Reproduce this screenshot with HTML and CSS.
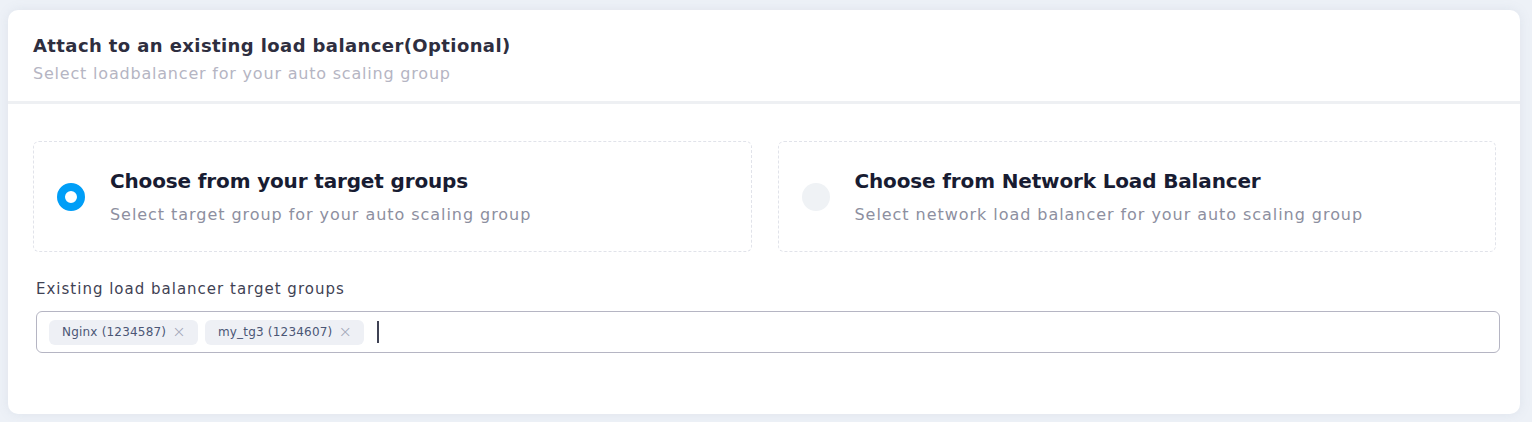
FILE: index.html
```html
<!DOCTYPE html>
<html lang="en">
<head>
<meta charset="utf-8">
<title>Attach load balancer</title>
<link rel="stylesheet" href="styles.css">
</head>
<body>
<div class="card">
  <div class="card-header">
    <h3 class="card-title">Attach to an existing load balancer(Optional)</h3>
    <div class="card-subtitle">Select loadbalancer for your auto scaling group</div>
  </div>
  <div class="card-body">
    <div class="options">
      <label class="option">
        <span class="radio radio-checked"></span>
        <span class="option-text">
          <span class="option-title">Choose from your target groups</span>
          <span class="option-desc">Select target group for your auto scaling group</span>
        </span>
      </label>
      <label class="option">
        <span class="radio"></span>
        <span class="option-text">
          <span class="option-title">Choose from Network Load Balancer</span>
          <span class="option-desc">Select network load balancer for your auto scaling group</span>
        </span>
      </label>
    </div>
    <div class="field">
      <div class="field-label">Existing load balancer target groups</div>
      <div class="tag-input">
        <span class="tag">Nginx (1234587)<span class="tag-x">×</span></span>
        <span class="tag">my_tg3 (1234607)<span class="tag-x">×</span></span>
        <span class="caret"></span>
      </div>
    </div>
  </div>
</div>
</body>
</html>
```
FILE: styles.css
```css
* { box-sizing: border-box; }
html, body { margin: 0; padding: 0; }
body {
  background: #edf1f7;
  font-family: "DejaVu Sans", "Inter", sans-serif;
  padding: 10px 12px 8px 8px;
  width: 1532px;
  height: 422px;
  overflow: hidden;
}
.card {
  width: 1512px;
  height: 404px;
  background: #ffffff;
  border-radius: 10px;
  box-shadow: 0 0 12px rgba(120, 130, 160, 0.12);
}
.card-header {
  padding: 22px 25px 15px;
  border-bottom: 3px solid #eef0f3;
}
.card-title {
  margin: 0;
  font-size: 18px;
  line-height: 27px;
  font-weight: 600;
  color: #2e2e3f;
  letter-spacing: 0.4px;
}
.card-subtitle {
  margin-top: 3px;
  font-size: 16px;
  line-height: 24px;
  color: #b5b5c3;
  letter-spacing: 0.8px;
}
.card-body {
  padding: 37px 24px 0 25px;
}
.options {
  display: grid;
  grid-template-columns: 1fr 1fr;
  gap: 26px;
}
.option {
  height: 111px;
  border: 1px dashed #e1e3ea;
  border-radius: 6px;
  display: flex;
  align-items: center;
  padding-left: 23px;
  gap: 25px;
}
.radio {
  width: 28px;
  height: 28px;
  border-radius: 50%;
  background: #eff2f5;
  flex: none;
}
.radio-checked {
  background: #ffffff;
  border: 8px solid #009ef7;
}
.option-text {
  display: flex;
  flex-direction: column;
}
.option-title {
  font-size: 20px;
  line-height: 30px;
  font-weight: 600;
  color: #181c32;
  letter-spacing: -0.15px;
}
.option-desc {
  margin-top: 7px;
  font-size: 16px;
  line-height: 24px;
  color: #8d8fa0;
  letter-spacing: 0.95px;
}
.field {
  margin: 26px -4px 0 3px;
}
.field-label {
  font-size: 15px;
  line-height: 22px;
  color: #3f4254;
  letter-spacing: 1px;
  margin-bottom: 11px;
}
.tag-input {
  height: 42px;
  border: 1px solid #b5b5c3;
  border-radius: 6px;
  display: flex;
  align-items: center;
  padding-left: 12px;
  gap: 7px;
}
.tag {
  height: 25px;
  background: #eef0f5;
  border-radius: 6px;
  padding: 0 12px 0 13px;
  display: inline-flex;
  align-items: center;
  font-size: 12px;
  color: #4b5675;
  letter-spacing: 0.2px;
}
.tag-x {
  margin-left: 6px;
  color: #a1a5b7;
  font-size: 16px;
  font-weight: 300;
  line-height: 1;
}
.caret {
  width: 2px;
  height: 22px;
  background: #3f4254;
  margin-left: 6px;
}
```
